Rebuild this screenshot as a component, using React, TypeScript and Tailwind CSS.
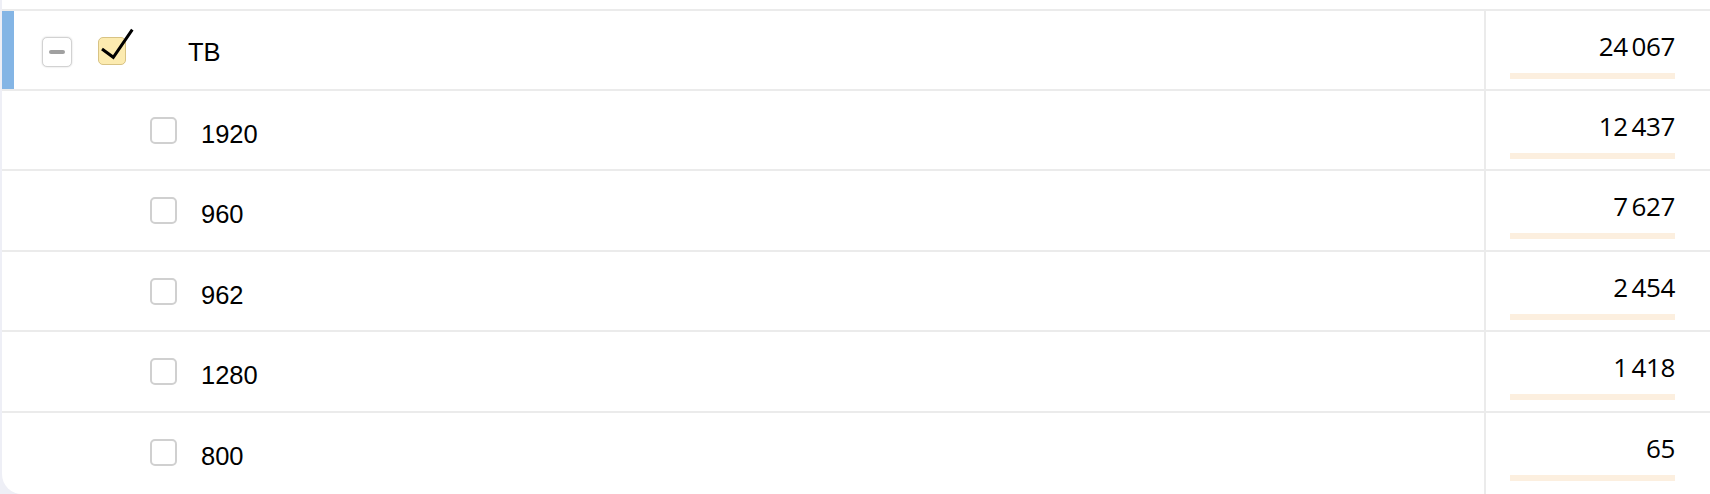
import React from "react";

const rows = [
  { label: "1920", value: "12\u2009437" },
  { label: "960", value: "7\u2009627" },
  { label: "962", value: "2\u2009454" },
  { label: "1280", value: "1\u2009418" },
  { label: "800", value: "65" },
];

function ValueCell({ value, last }: { value: string; last?: boolean }) {
  return (
    <div
      className={
        "w-[226px] shrink-0 border-l-2 border-[#ebebeb] pl-[24px] pr-[35px] pt-[22px] flex flex-col items-end " +
        (last ? "h-full" : "")
      }
    >
      <div
        className="h-[26px] leading-[26px] text-[26px] tracking-[-0.4px] text-black"
        style={{ fontFamily: '"Open Sans", "Noto Sans", sans-serif' }}
      >
        {value}
      </div>
      <div className="mt-[14px] h-[6px] w-[165px] bg-[#fcefdf]" />
    </div>
  );
}

export default function App() {
  return (
    <div className="h-[494px] w-[1710px] overflow-hidden bg-[#eeeff6] pl-[2px]">
      <div
        className="h-[494px] w-[1708px] bg-white rounded-bl-[20px] overflow-hidden pt-[9px]"
        style={{ fontFamily: '"Liberation Sans", Arial, sans-serif' }}
      >
        <div className="border-t-2 border-[#ebebeb]">
          {/* parent row */}
          <div className="flex h-[80px] border-b-2 border-[#ebebeb]">
            <div className="flex flex-1 items-start">
              <div className="w-[12px] self-stretch bg-[#84b5e5]" />
              <div className="ml-[28px] mt-[26px] flex h-[30px] w-[30px] items-center justify-center rounded-[5px] border border-[#d2d2d2] bg-white shadow-[0_0_2px_rgba(0,0,0,0.18)]">
                <div className="h-[4px] w-[16px] rounded-full bg-[#a0a0a0]" />
              </div>
              <div className="relative ml-[26px] mt-[26px] h-[28px] w-[28px] rounded-[5px] border border-[#d8c384] bg-[#fcebb0]">
                <svg
                  className="absolute left-[-1px] top-[-11px] overflow-visible"
                  width="40"
                  height="40"
                  viewBox="0 0 40 40"
                >
                  <path
                    d="M4 22 L15.3 30.3 L34.3 2.7"
                    fill="none"
                    stroke="#000"
                    strokeWidth="3"
                    strokeLinejoin="miter"
                  />
                </svg>
              </div>
              <div className="ml-[62px] mt-[29px] text-[25.5px] leading-[25.5px] text-black">
                TB
              </div>
            </div>
            <ValueCell value={"24\u2009067"} />
          </div>

          {rows.map((r, i) => {
            const last = i === rows.length - 1;
            return (
              <div
                key={r.label}
                className={
                  "flex " +
                  (last ? "h-[90px]" : "h-[80.4px] border-b-2 border-[#ebebeb]")
                }
              >
                <div className="flex flex-1 items-start pl-[148px]">
                  <div className="mt-[26px] h-[27px] w-[27px] rounded-[5px] border-2 border-[#d0d0d0] bg-white" />
                  <div className="ml-[24px] mt-[31px] text-[25.5px] leading-[25.5px] text-black">
                    {r.label}
                  </div>
                </div>
                <ValueCell value={r.value} last={last} />
              </div>
            );
          })}
        </div>
      </div>
    </div>
  );
}
